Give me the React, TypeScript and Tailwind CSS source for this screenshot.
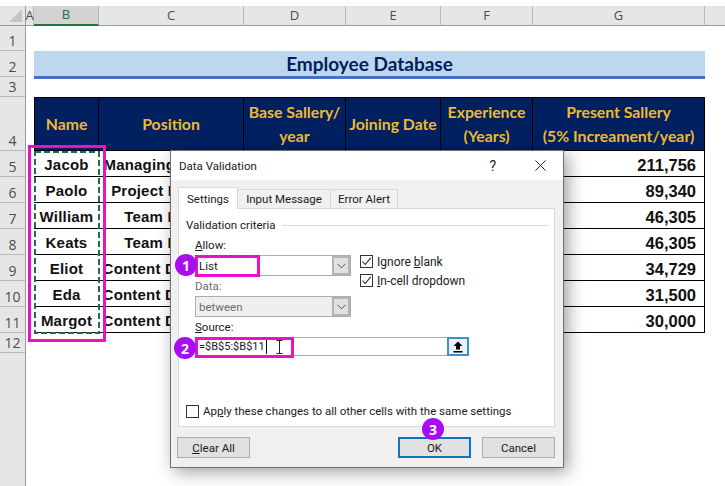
import React from "react";

const rowHead = "flex items-end justify-center bg-[#e6e6e6] border-b border-r border-b-[#b8b8b8] border-r-[#9c9c9c] text-[14px] leading-[18px] text-[#4d4d4d] font-['Open_Sans',sans-serif]";
const colHead = "flex items-center justify-center bg-[#e6e6e6] border-b border-r border-b-[#9c9c9c] border-r-[#b8b8b8] text-[13px] text-[#4d4d4d] font-['Open_Sans',sans-serif]";
const headCell = "flex items-center justify-center text-center bg-[#002060] border-t border-r border-b border-black text-[#efb92e] text-[15.8px] leading-[24px] font-bold font-['Lato',sans-serif] whitespace-nowrap";
const bodyCell = "flex items-center overflow-hidden whitespace-nowrap border-r border-b border-black pt-[3px] text-[#111] text-[15px] tracking-[0.2px] font-bold font-['Liberation_Sans',sans-serif]";

const people = [
  ["Jacob", "Managing Director", "211,756"],
  ["Paolo", "Project Manager", "89,340"],
  ["William", "Team Leader", "46,305"],
  ["Keats", "Team Leader", "46,305"],
  ["Eliot", "Content Developer", "34,729"],
  ["Eda", "Content Developer", "31,500"],
  ["Margot", "Content Developer", "30,000"],
];

function Check({ checked = true }: { checked?: boolean }) {
  return (
    <span className="flex h-[13px] w-[13px] shrink-0 items-center justify-center border border-[#333] bg-white">
      {checked && (
        <svg width="11" height="11" viewBox="0 0 11 11">
          <path d="M1.5 5.5 L4.2 8.5 L9.8 1.8" fill="none" stroke="#222" strokeWidth="1.1" />
        </svg>
      )}
    </span>
  );
}

function Combo({ value, disabled = false }: { value: string; disabled?: boolean }) {
  return (
    <div className={`flex h-[21px] w-[156px] items-center border border-[#adadad] pl-[3px] ${disabled ? "bg-[#efefef] text-[#6d6d6d]" : "bg-white"}`}>
      <span className="flex-1">{value}</span>
      <span className="flex h-full w-[18px] items-center justify-center border-2 border-[#b4b4b4] bg-[#e1e1e1]">
        <svg width="9" height="6" viewBox="0 0 9 6">
          <path d="M0.5 0.8 L4.5 4.8 L8.5 0.8" fill="none" stroke="#555" strokeWidth="1" />
        </svg>
      </span>
    </div>
  );
}

function Btn({ children, primary = false }: { children: React.ReactNode; primary?: boolean }) {
  return (
    <div className={`flex h-[21px] w-[73px] items-center justify-center bg-[#e1e1e1] ${primary ? "border-2 border-[#1472b8]" : "border border-[#adadad]"}`}>
      {children}
    </div>
  );
}

function Badge({ n, className }: { n: number; className: string }) {
  return (
    <div className={`absolute flex h-[22px] w-[22px] items-center justify-center rounded-full bg-[#a80cf0] text-[14px] font-bold text-white font-['Open_Sans',sans-serif] ${className}`}>
      {n}
    </div>
  );
}

export default function App() {
  return (
    <div className="relative h-[486px] w-[725px] overflow-hidden bg-white">
      <div className="grid h-full w-full grid-cols-[26px_8px_65px_145px_102px_95px_92px_172px_20px] grid-rows-[6px_20px_25px_26px_20px_54px_repeat(7,26px)_20px_1fr]">
        {/* top gap */}
        <div className="col-span-9" />

        {/* column letters */}
        <div className="flex items-end justify-end bg-[#e6e6e6] border-r border-b border-[#9c9c9c] pb-[3px] pr-[3px]">
          <svg width="13" height="13" viewBox="0 0 13 13"><path d="M13 0 V13 H0 Z" fill="#c4c4c4" /></svg>
        </div>
        <div className={colHead}>A</div>
        <div className="flex items-center justify-center border-r border-r-[#b8b8b8] border-b-2 border-b-[#217346] bg-[#d3d3d3] text-[13px] text-[#2a6a4a] font-['Open_Sans',sans-serif]">B</div>
        <div className={colHead}>C</div>
        <div className={colHead}>D</div>
        <div className={colHead}>E</div>
        <div className={colHead}>F</div>
        <div className={colHead}>G</div>
        <div className="bg-[#e6e6e6] border-b border-[#9c9c9c]" />

        {/* row 1 */}
        <div className={rowHead}>1</div>
        <div className="col-span-8" />

        {/* row 2 */}
        <div className={rowHead}>2</div>
        <div />
        <div className="col-span-6 flex h-[28px] items-center justify-center self-start border-b-[3px] border-[#4472c4] bg-[#bdd7ee] pt-[1px] text-[19px] font-bold text-[#002060] font-['Lato',sans-serif]">
          Employee Database
        </div>
        <div />

        {/* row 3 */}
        <div className={rowHead}>3</div>
        <div className="col-span-8" />

        {/* row 4 */}
        <div className={rowHead}>4</div>
        <div />
        <div className={`${headCell} border-l`}>Name</div>
        <div className={headCell}>Position</div>
        <div className={headCell}>Base Sallery/<br />year</div>
        <div className={headCell}>Joining Date</div>
        <div className={headCell}>Experience<br />(Years)</div>
        <div className={headCell}>Present Sallery<br />(5% Increament/year)</div>
        <div />

        {/* rows 5 - 11 */}
        {people.map((p, i) => (
          <React.Fragment key={i}>
            <div className={rowHead}>{i + 5}</div>
            <div />
            <div className={`${bodyCell} justify-center border-r-0`}>{p[0]}</div>
            <div className={`${bodyCell} justify-center`}>{p[1]}</div>
            <div className={bodyCell} />
            <div className={bodyCell} />
            <div className={bodyCell} />
            <div className={`${bodyCell} justify-end pr-[8px] text-[16.5px] tracking-normal`}>{p[2]}</div>
            <div />
          </React.Fragment>
        ))}

        {/* row 12 */}
        <div className={rowHead}>12</div>
        <div className="col-span-8" />

        {/* rest */}
        <div className="bg-[#e6e6e6] border-r border-[#9c9c9c]" />
        <div className="col-span-8" />
      </div>

      {/* copy selection and highlight around names */}
      <svg className="absolute left-[34px] top-[151px]" width="66" height="183" viewBox="0 0 66 183">
        <rect x="1" y="1" width="64" height="181" fill="none" stroke="#1f6b4a" strokeWidth="2" strokeDasharray="6 3" />
      </svg>
      <div className="absolute left-[28px] top-[145px] h-[197px] w-[78px] border-[3px] border-[#ea12c8]" />

      {/* dialog */}
      <div className="absolute left-[170px] top-[150px] flex h-[318px] w-[394px] flex-col border border-[#6f6f6f] bg-[#f0f0f0] text-[11.5px] leading-[16px] text-[#1a1a1a] shadow-[4px_4px_16px_rgba(0,0,0,0.38)] font-['Roboto',sans-serif]">
        <div className="flex h-[29px] shrink-0 items-center bg-white pl-[8px]">
          <span className="flex-1">Data Validation</span>
          <span className="mr-[39px] text-[14px]">?</span>
          <svg className="mr-[17px]" width="11" height="11" viewBox="0 0 11 11">
            <path d="M0.5 0.5 L10.5 10.5 M10.5 0.5 L0.5 10.5" stroke="#222" strokeWidth="1" fill="none" />
          </svg>
        </div>

        <div className="flex flex-1 flex-col pl-[7px] pr-[8px]">
          <div className="relative z-10 mt-[7px] flex h-[22px] shrink-0 items-end">
            <div className="flex h-[22px] w-[60px] items-center justify-center border border-b-0 border-[#d9d9d9] bg-white pt-[1px]">Settings</div>
            <div className="mb-[1px] flex h-[19px] w-[93px] items-center justify-center border-r border-t border-[#d9d9d9]">Input Message</div>
            <div className="mb-[1px] flex h-[19px] w-[67px] items-center justify-center border-r border-t border-[#d9d9d9]">Error Alert</div>
          </div>

          <div className="-mt-px flex h-[219px] shrink-0 flex-col border border-[#d9d9d9] bg-white pl-[7px] pr-[5px] pt-[8px] pb-[7px]">
            <div className="flex items-center gap-[6px]">
              <span>Validation criteria</span>
              <span className="h-px flex-1 bg-[#dcdcdc]" />
            </div>

            <div className="ml-[9px] mt-[4px] flex gap-[9px]">
              <div className="flex flex-col">
                <div className="h-[16px]"><u>A</u>llow:</div>
                <div className="mt-[2px]"><Combo value="List" /></div>
                <div className="mt-[2px] h-[16px] text-[#6d6d6d]">Data:</div>
                <div className="mt-[2px]"><Combo value="between" disabled /></div>
              </div>
              <div className="flex flex-col gap-[6px] pt-[18px] text-[12px]">
                <div className="flex h-[13px] items-center gap-[4px]"><Check /><span>Ignore <u>b</u>lank</span></div>
                <div className="flex h-[13px] items-center gap-[4px]"><Check /><span><u>I</u>n-cell dropdown</span></div>
              </div>
            </div>

            <div className="ml-[9px] mt-[2px] h-[16px]"><u>S</u>ource:</div>
            <div className="ml-[9px] mt-[2px] flex h-[19px] w-[274px]">
              <div className="flex w-[252px] items-center border border-r-0 border-[#adadad] pl-[3px]">
                <span className="text-[11px]">=$B$5:$B$11</span>
                <span className="ml-[1px] h-[14px] w-px bg-black" />
                <svg className="ml-[9px]" width="7" height="14" viewBox="0 0 7 14">
                  <path d="M0.5 0.5 H6.5 M3.5 0.5 V13.5 M0.5 13.5 H6.5" stroke="#222" strokeWidth="1" fill="none" />
                </svg>
              </div>
              <div className="flex w-[22px] items-center justify-center border-2 border-[#3f8fc9] bg-[#e8f3fb]">
                <svg width="12" height="12" viewBox="0 0 12 12">
                  <path d="M6 0.5 L10.5 5 H8 V8.5 H4 V5 H1.5 Z M1.5 10 H10.5 V11.5 H1.5 Z" fill="#000" />
                </svg>
              </div>
            </div>

            <div className="flex-1" />
            <div className="flex h-[16px] items-center gap-[4px]">
              <Check checked={false} />
              <span>Ap<u>p</u>ly these changes to all other cells with the same settings</span>
            </div>
          </div>

          <div className="-ml-px mt-[10px] flex">
            <div className="w-[74px]"><Btn><span><u>C</u>lear All</span></Btn></div>
            <div className="flex-1" />
            <div className="flex gap-[11px]">
              <Btn primary>OK</Btn>
              <Btn>Cancel</Btn>
            </div>
          </div>
        </div>
      </div>

      {/* callouts */}
      <div className="absolute left-[195px] top-[255px] h-[22px] w-[65px] border-[3px] border-[#ea12c8]" />
      <div className="absolute left-[195px] top-[337px] h-[21px] w-[99px] border-[3px] border-[#ea12c8]" />
      <Badge n={1} className="left-[175px] top-[254px]" />
      <Badge n={2} className="left-[174px] top-[337px]" />
      <Badge n={3} className="left-[422px] top-[418px]" />
    </div>
  );
}
